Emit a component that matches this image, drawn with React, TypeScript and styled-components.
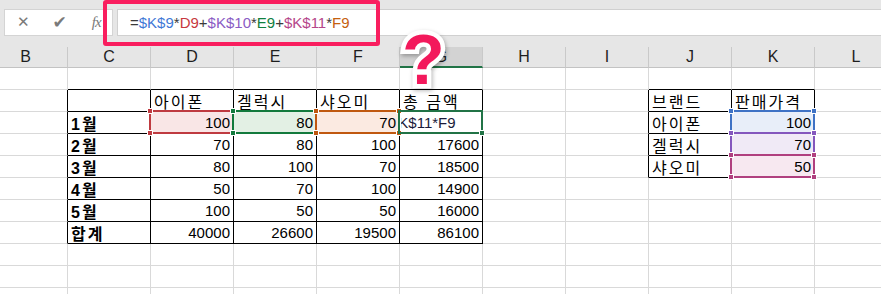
import React from "react";
import styled, { createGlobalStyle } from "styled-components";

const GlobalStyle = createGlobalStyle`
  html, body {
    margin: 0;
    padding: 0;
    background: #fff;
    overflow: hidden;
  }
  body {
    font-family: "Liberation Sans", Arial, sans-serif;
  }
`;

type RefKind = "red" | "green" | "orange" | "blue" | "purple" | "magenta";

const REF: Record<RefKind, { line: string; fill: string; text: string }> = {
  red: { line: "#bf3a40", fill: "#f9e6e6", text: "#c7383e" },
  green: { line: "#127a3c", fill: "#e3f0e4", text: "#11803f" },
  orange: { line: "#c0580f", fill: "#fbeae1", text: "#c5600f" },
  blue: { line: "#3f72c5", fill: "#e8eef9", text: "#3f78d6" },
  purple: { line: "#8457bd", fill: "#f0eaf6", text: "#8a5cc4" },
  magenta: { line: "#b0407f", fill: "#f7e8f0", text: "#b5468a" },
};

const COLS = ["B", "C", "D", "E", "F", "G", "H", "I", "J", "K", "L"];
const ACTIVE_COL = 5;

type CellData = {
  text?: string;
  bold?: boolean;
  num?: boolean;
  ref?: RefKind;
  active?: boolean;
};

// rows 7..17, columns B..L
const ROWS: Record<number, Record<number, CellData>> = {
  1: {
    2: { text: "아이폰" },
    3: { text: "겔럭시" },
    4: { text: "샤오미" },
    5: { text: "총 금액" },
    8: { text: "브랜드" },
    9: { text: "판매가격" },
  },
  2: {
    1: { text: "1월", bold: true },
    2: { text: "100", num: true, ref: "red" },
    3: { text: "80", num: true, ref: "green" },
    4: { text: "70", num: true, ref: "orange" },
    5: { text: "$K$11*F9", active: true },
    8: { text: "아이폰" },
    9: { text: "100", num: true, ref: "blue" },
  },
  3: {
    1: { text: "2월", bold: true },
    2: { text: "70", num: true },
    3: { text: "80", num: true },
    4: { text: "100", num: true },
    5: { text: "17600", num: true },
    8: { text: "겔럭시" },
    9: { text: "70", num: true, ref: "purple" },
  },
  4: {
    1: { text: "3월", bold: true },
    2: { text: "80", num: true },
    3: { text: "100", num: true },
    4: { text: "70", num: true },
    5: { text: "18500", num: true },
    8: { text: "샤오미" },
    9: { text: "50", num: true, ref: "magenta" },
  },
  5: {
    1: { text: "4월", bold: true },
    2: { text: "50", num: true },
    3: { text: "70", num: true },
    4: { text: "100", num: true },
    5: { text: "14900", num: true },
  },
  6: {
    1: { text: "5월", bold: true },
    2: { text: "100", num: true },
    3: { text: "50", num: true },
    4: { text: "50", num: true },
    5: { text: "16000", num: true },
  },
  7: {
    1: { text: "합계", bold: true },
    2: { text: "40000", num: true },
    3: { text: "26600", num: true },
    4: { text: "19500", num: true },
    5: { text: "86100", num: true },
  },
};

const ROW_COUNT = 11;

const inTable = (r: number, c: number) =>
  (r >= 1 && r <= 7 && c >= 1 && c <= 5) || (r >= 1 && r <= 4 && c >= 8 && c <= 9);

const FORMULA: { t: string; kind?: RefKind }[] = [
  { t: "=" },
  { t: "$K$9", kind: "blue" },
  { t: "*" },
  { t: "D9", kind: "red" },
  { t: "+" },
  { t: "$K$10", kind: "purple" },
  { t: "*" },
  { t: "E9", kind: "green" },
  { t: "+" },
  { t: "$K$11", kind: "magenta" },
  { t: "*" },
  { t: "F9", kind: "orange" },
];

const App: React.FC = () => {
  return (
    <Page>
      <GlobalStyle />
      <FormulaArea>
        <ButtonBox>
          <ToolGlyph>✕</ToolGlyph>
          <ToolGlyph $size={17}>✔</ToolGlyph>
          <FxGlyph>fx</FxGlyph>
        </ButtonBox>
        <FormulaInput>
          {FORMULA.map((p, i) => (
            <FormulaPart key={i} $color={p.kind ? REF[p.kind].text : "#3a3a3a"}>
              {p.t}
            </FormulaPart>
          ))}
        </FormulaInput>
      </FormulaArea>

      <Sheet>
        {COLS.map((c, i) => (
          <ColHeader key={c} $active={i === ACTIVE_COL} $partial={i === 0}>
            {c}
          </ColHeader>
        ))}
        {Array.from({ length: ROW_COUNT }).map((_, r) =>
          COLS.map((_c, c) => {
            const d = ROWS[r]?.[c] ?? {};
            const dark = inTable(r, c);
            const rightDark = dark || inTable(r, c + 1);
            const bottomDark = dark || inTable(r + 1, c);
            return (
              <Cell
                key={`${r}-${c}`}
                $rightDark={rightDark}
                $bottomDark={bottomDark}
                $fill={d.ref ? REF[d.ref].fill : undefined}
                $num={!!d.num}
                $bold={!!d.bold}
              >
                {d.active ? (
                  <EditClip>
                    <EditText>{d.text}</EditText>
                  </EditClip>
                ) : (
                  d.text && <CellText $num={!!d.num}>{d.text}</CellText>
                )}
                {d.ref && (
                  <RefBox $color={REF[d.ref].line}>
                    <Handle $color={REF[d.ref].line} $pos="tl" />
                    <Handle $color={REF[d.ref].line} $pos="tr" />
                    <Handle $color={REF[d.ref].line} $pos="bl" />
                    <Handle $color={REF[d.ref].line} $pos="br" />
                  </RefBox>
                )}
                {d.active && (
                  <RefBox $color="#217346">
                    <Handle $color="#217346" $pos="br" />
                  </RefBox>
                )}
              </Cell>
            );
          })
        )}
      </Sheet>

      <Highlight />
      <QuestionMark>?</QuestionMark>
    </Page>
  );
};

export default App;

const Page = styled.div`
  position: relative;
  width: 881px;
  height: 294px;
  overflow: hidden;
  background: #fff;
`;

const FormulaArea = styled.div`
  height: 47px;
  box-sizing: border-box;
  background: #e6e6e6;
  display: flex;
  align-items: flex-start;
  gap: 4px;
  padding: 9px 0 0 4px;
`;

const ButtonBox = styled.div`
  width: 109px;
  height: 27px;
  box-sizing: border-box;
  background: #fff;
  border: 1px solid #d4d4d4;
  display: flex;
  align-items: center;
  padding: 0 10px 0 12px;
  gap: 23px;
`;

const ToolGlyph = styled.span<{ $size?: number }>`
  color: #7a7a7a;
  font-family: "DejaVu Sans", sans-serif;
  font-size: ${(p) => p.$size ?? 15}px;
  line-height: 1;
`;

const FxGlyph = styled.span`
  color: #7a7a7a;
  font-family: "Liberation Serif", serif;
  font-style: italic;
  font-size: 15px;
  letter-spacing: -1px;
  margin-left: 2px;
`;

const FormulaInput = styled.div`
  flex: 1;
  height: 27px;
  box-sizing: border-box;
  background: #fff;
  border: 1px solid #d0d0d0;
  border-right: none;
  padding-left: 12px;
  display: flex;
  align-items: center;
  font-size: 15px;
`;

const FormulaPart = styled.span<{ $color: string }>`
  color: ${(p) => p.$color};
`;

const Sheet = styled.div`
  display: grid;
  grid-template-columns: 68px repeat(10, 83px);
  grid-template-rows: 21px;
  grid-auto-rows: 22px;
`;

const ColHeader = styled.div<{ $active: boolean; $partial: boolean }>`
  box-sizing: border-box;
  background: ${(p) => (p.$active ? "#d3d3d3" : "#e6e6e6")};
  border-right: 1px solid #c9c9c9;
  border-bottom: ${(p) => (p.$active ? "2px solid #217346" : "1px solid #c3c3c3")};
  display: flex;
  align-items: center;
  justify-content: center;
  padding-right: ${(p) => (p.$partial ? "16px" : "0")};
  color: #1e1e1e;
  font-size: 16px;
`;

const Cell = styled.div<{
  $rightDark: boolean;
  $bottomDark: boolean;
  $fill?: string;
  $num: boolean;
  $bold: boolean;
}>`
  position: relative;
  box-sizing: border-box;
  min-width: 0;
  background: ${(p) => p.$fill ?? "#fff"};
  border-right: 1px solid ${(p) => (p.$rightDark ? "#000" : "#d9d9d9")};
  border-bottom: 1px solid ${(p) => (p.$bottomDark ? "#000" : "#d9d9d9")};
  display: flex;
  align-items: center;
  justify-content: ${(p) => (p.$num ? "flex-end" : "flex-start")};
  padding: 0 3px;
  color: #000;
  font-weight: ${(p) => (p.$bold ? 700 : 400)};
  font-size: 15px;
`;

const CellText = styled.span<{ $num: boolean }>`
  font-family: ${(p) =>
    p.$num ? '"Liberation Sans", Arial, sans-serif' : '"Liberation Sans", "Noto Sans CJK KR", sans-serif'};
  font-size: ${(p) => (p.$num ? "15px" : "16px")};
  letter-spacing: ${(p) => (p.$num ? "0" : "2px")};
  white-space: nowrap;
`;

const EditClip = styled.div`
  flex: 1;
  min-width: 0;
  overflow: hidden;
  margin-left: -2px;
`;

const EditText = styled.span`
  display: inline-block;
  color: #1a1a3a;
  white-space: nowrap;
  margin-left: -11px;
`;

const RefBox = styled.div<{ $color: string }>`
  position: absolute;
  left: -2px;
  top: -2px;
  right: -1px;
  bottom: -1px;
  border: 2px solid ${(p) => p.$color};
  z-index: 2;
  pointer-events: none;
`;

const Handle = styled.span<{ $color: string; $pos: "tl" | "tr" | "bl" | "br" }>`
  position: absolute;
  width: 6px;
  height: 6px;
  box-sizing: border-box;
  background: ${(p) => p.$color};
  border: 1px solid #fff;
  ${(p) => (p.$pos[0] === "t" ? "top: -4px;" : "bottom: -4px;")}
  ${(p) => (p.$pos[1] === "l" ? "left: -4px;" : "right: -4px;")}
`;

const Highlight = styled.div`
  position: absolute;
  left: 103px;
  top: 0;
  width: 277px;
  height: 46px;
  box-sizing: border-box;
  border: 4px solid #f91e5f;
  border-radius: 3px;
  z-index: 5;
`;

const QuestionMark = styled.div`
  position: absolute;
  left: 402px;
  top: 25px;
  z-index: 6;
  font-family: "Liberation Sans", Arial, sans-serif;
  font-weight: 700;
  font-size: 70px;
  line-height: 1;
  color: #f3195c;
  -webkit-text-stroke: 9px #fff;
  paint-order: stroke fill;
  filter: drop-shadow(1px 2px 2px rgba(0, 0, 0, 0.3));
`;
